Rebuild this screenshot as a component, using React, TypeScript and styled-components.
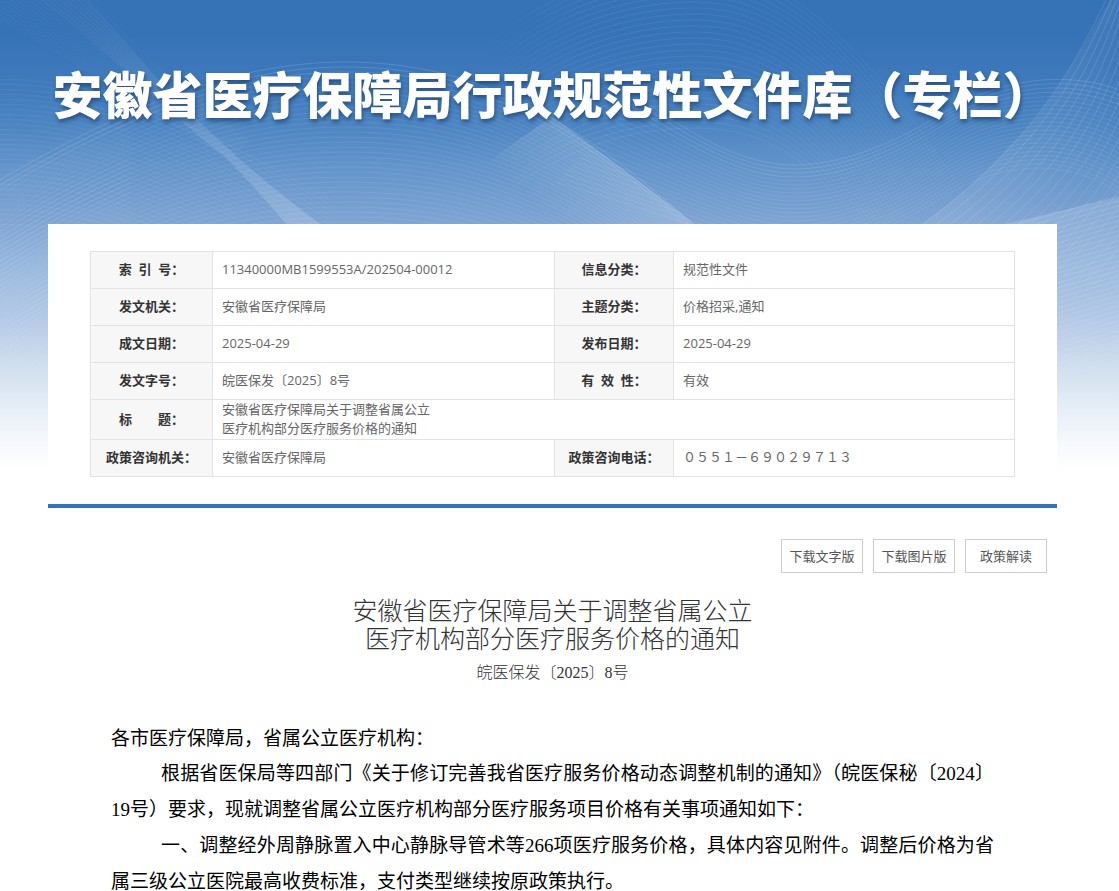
import React from "react";
import styled, { createGlobalStyle } from "styled-components";

const sans = `"Open Sans", "Noto Sans CJK SC", sans-serif`;
const serif = `"Liberation Serif", "Noto Sans CJK SC", serif`;

const GlobalStyle = createGlobalStyle`
  * { box-sizing: border-box; }
  body { margin: 0; background: #fff; color: #333; font-family: ${sans}; font-size: 13px; }
  h1, h2, p { margin: 0; font-weight: 400; }
`;

const Page = styled.div`
  position: relative;
  padding: 0 62px 0 48px;
`;

const Backdrop = styled.div`
  position: absolute;
  top: 0;
  left: 0;
  right: 0;
  height: 476px;
  z-index: -1;
  background: linear-gradient(
    #3672b6 0%, #3672b6 7%, #3a76b9 13%, #437dbe 20%, #4c85c2 26%, #6394ca 35%, #7da3d2 46%,
    #9abade 57%, #b7cbe7 68%, #d3e0ee 78%, #e7eef7 86%, #f8fafd 94%, #fff 100%
  );

  svg {
    display: block;
    width: 100%;
    height: 100%;
  }
`;

const Banner = styled.header`
  height: 224px;
  padding-top: 55px;
`;

const SiteTitle = styled.h1`
  display: flex;
  justify-content: center;
  color: #fff;
  font-family: "Noto Sans CJK SC", sans-serif;
  font-size: 50px;
  font-weight: 900;
  line-height: 74px;
  white-space: nowrap;
  text-shadow: 1px 3px 4px rgba(20, 50, 90, 0.6);
`;

const Panel = styled.section`
  padding: 27px 42px;
  background: #fff;
  border-bottom: 4px solid #3672b6;
`;

const InfoTable = styled.table`
  width: 100%;
  table-layout: fixed;
  border-collapse: collapse;
`;

const Row = styled.tr<{ $tall?: boolean }>`
  height: ${(p) => (p.$tall ? 40 : 37)}px;
`;

const Label = styled.th`
  padding: 0 0 1px;
  border: 1px solid #e3e3e3;
  background: #f7f7f7;
  color: #333;
  font-weight: 700;
  line-height: 19px;
  text-align: center;
  white-space: nowrap;
`;

const Value = styled.td`
  padding: 0 9px 1px;
  border: 1px solid #e3e3e3;
  color: #666;
  line-height: 19px;
`;

const Actions = styled.nav`
  display: flex;
  justify-content: flex-end;
  gap: 10px;
  padding: 31px 10px 23px;
`;

const ActionButton = styled.button`
  width: 82px;
  height: 34px;
  padding: 0 0 2px;
  border: 1px solid #ccc;
  background: #fff;
  color: #555;
  font: 13px ${sans};
  cursor: pointer;
`;

const DocTitle = styled.h2`
  color: #333;
  font-size: 25px;
  font-weight: 300;
  line-height: 28px;
  text-align: center;
`;

const DocNumber = styled.p`
  padding-top: 11px;
  font-family: ${serif};
  font-size: 16px;
  font-weight: 300;
  line-height: 20px;
  text-align: center;
`;

const Article = styled.article`
  padding: 39px 63px 0;
  color: #000;
  font-family: ${serif};
  font-size: 19px;
  font-weight: 500;
`;

const Salutation = styled.p`
  line-height: 34px;
`;

const Paragraph = styled.p`
  line-height: 36px;
  text-indent: 50px;
  text-align: justify;
`;

const range = (n: number) => Array.from({ length: n }, (_, i) => i);

function Waves() {
  return (
    <svg viewBox="0 0 1119 476" preserveAspectRatio="xMidYMin slice" aria-hidden="true">
      <defs>
        <linearGradient id="fade" x1="0" y1="0" x2="0" y2="1">
          <stop offset="0" stopColor="#fff" />
          <stop offset="0.6" stopColor="#fff" />
          <stop offset="0.95" stopColor="#000" />
        </linearGradient>
        <mask id="fadeMask" maskUnits="userSpaceOnUse" x="0" y="0" width="1119" height="476">
          <rect width="1119" height="476" fill="url(#fade)" />
        </mask>
        <linearGradient id="wedge" gradientUnits="userSpaceOnUse" x1="640" y1="180" x2="590" y2="246">
          <stop offset="0" stopColor="#fff" stopOpacity="0.18" />
          <stop offset="1" stopColor="#fff" stopOpacity="0" />
        </linearGradient>
        <linearGradient id="ribbon" gradientUnits="userSpaceOnUse" x1="100" y1="0" x2="300" y2="224">
          <stop offset="0" stopColor="#fff" stopOpacity="0.02" />
          <stop offset="1" stopColor="#fff" stopOpacity="0.17" />
        </linearGradient>
        <linearGradient id="corner" gradientUnits="userSpaceOnUse" x1="1000" y1="150" x2="1080" y2="200">
          <stop offset="0" stopColor="#fff" stopOpacity="0.08" />
          <stop offset="1" stopColor="#fff" stopOpacity="0" />
        </linearGradient>
        <linearGradient id="shelf" gradientUnits="userSpaceOnUse" x1="1070" y1="200" x2="1090" y2="300">
          <stop offset="0" stopColor="#fff" stopOpacity="0.16" />
          <stop offset="1" stopColor="#fff" stopOpacity="0" />
        </linearGradient>
        <linearGradient id="domeStroke" gradientUnits="userSpaceOnUse" x1="460" y1="0" x2="960" y2="0">
          <stop offset="0" stopColor="#fff" stopOpacity="0" />
          <stop offset="0.25" stopColor="#fff" stopOpacity="0.08" />
          <stop offset="0.75" stopColor="#fff" stopOpacity="0.06" />
          <stop offset="1" stopColor="#fff" stopOpacity="0.05" />
        </linearGradient>
      </defs>
      <g mask="url(#fadeMask)" fill="none" stroke="#fff" strokeWidth="1">
        <path d="M40 0H88C112 26 134 52 155 76C205 130 260 180 320 224H286C266 200 244 176 224 156C180 124 130 70 40 0Z" fill="url(#ribbon)" stroke="none" />
        <path d="M552 116C600 152 648 188 695 224H400Z" fill="url(#wedge)" stroke="none" />
        <path d="M1110 0C1080 50 1050 110 1010 146C985 176 950 204 922 224H1119V0Z" fill="url(#corner)" stroke="none" />
        <path d="M1005 224C1040 216 1080 206 1119 197V310H1005Z" fill="url(#shelf)" stroke="none" />

        {/* band of fine lines falling from the top left corner */}
        {range(20).map((i) => (
          <path key={`a${i}`} strokeOpacity="0.05" d={`M${-20 + i * 5} ${6 - i}C${40 + i * 4} ${42 - i} ${110 + i * 2} ${84 - i} ${230 + i} ${160 - i}`} />
        ))}

        {/* wide domes on the left */}
        {range(44).map((i) => (
          <path key={`b${i}`} strokeOpacity={i < 3 ? 0.14 : 0.08} d={`M-60 ${216 + i * 5}C${110 - i} ${110 + i * 5} ${230 - i} ${62 + i * 5} 345 ${62 + i * 5}S${560 + i} ${104 + i * 5} ${690 + i * 2} ${222 + i * 5}`} />
        ))}
        {range(30).map((i) => (
          <path key={`c${i}`} strokeOpacity="0.06" d={`M-10 ${80 + i * 5}Q60 ${76 + i * 5} 140 ${106 + i * 5}T330 ${200 + i * 5}`} />
        ))}
        {range(50).map((i) => (
          <path key={`d${i}`} strokeOpacity="0.08" d={`M-10 ${192 + i * 5}Q60 ${150 + i * 5} 130 ${118 + i * 5}`} />
        ))}

        {/* domes behind the middle of the title */}
        {range(28).map((i) => (
          <path key={`e${i}`} stroke="url(#domeStroke)" d={`M460 ${70 + i * 6}C530 ${-2 + i * 6} 615 ${-34 + i * 6} 695 ${-34 + i * 6}S${870 - i} ${30 + i * 5} ${1010 - i * 3} ${270 + i * 3}`} />
        ))}

        {/* bowls rising to the right */}
        {range(22).map((i) => (
          <path key={`f${i}`} strokeOpacity={i < 4 ? 0.12 : 0.08} d={`M${640 - i * 4} ${98 + i * 4}C700 ${140 + i * 4} 745 ${165 + i * 4} 795 ${165 + i * 4}S900 ${140 + i * 4} 945 ${112 + i * 4}S1060 ${66 + i * 4} 1125 ${92 + i * 5}`} />
        ))}

        {/* fan on the right edge */}
        {range(26).map((i) => (
          <path key={`g${i}`} strokeOpacity={0.14 - i * 0.003} d={`M${1108 + i * 5} -4C${1076 + i * 7} ${60 + i * 2} ${1040 + i * 9} ${140 + i * 3} ${915 + i * 10} ${230 + i * 3}`} />
        ))}
        {range(34).map((i) => (
          <path key={`h${i}`} strokeOpacity="0.12" d={`M1005 ${228 + i * 5}Q1060 ${212 + i * 5} 1125 ${194 + i * 5}`} />
        ))}
      </g>
    </svg>
  );
}

const rows: [string, string, string, string][] = [
  ["索\u00a0\u00a0引\u00a0\u00a0号：", "11340000MB1599553A/202504-00012", "信息分类：", "规范性文件"],
  ["发文机关：", "安徽省医疗保障局", "主题分类：", "价格招采,通知"],
  ["成文日期：", "2025-04-29", "发布日期：", "2025-04-29"],
  ["发文字号：", "皖医保发〔2025〕8号", "有\u00a0\u00a0效\u00a0\u00a0性：", "有效"],
];

export default function App() {
  return (
    <>
      <GlobalStyle />
      <Page>
        <Backdrop>
          <Waves />
        </Backdrop>
        <Banner>
          <SiteTitle>安徽省医疗保障局行政规范性文件库（专栏）</SiteTitle>
        </Banner>
        <main>
          <Panel>
            <InfoTable>
              <colgroup>
                <col style={{ width: "13.2%" }} />
                <col style={{ width: "37%" }} />
                <col style={{ width: "12.9%" }} />
                <col />
              </colgroup>
              <tbody>
                {rows.map(([l1, v1, l2, v2]) => (
                  <Row key={l1}>
                    <Label scope="row">{l1}</Label>
                    <Value>{v1}</Value>
                    <Label scope="row">{l2}</Label>
                    <Value>{v2}</Value>
                  </Row>
                ))}
                <Row $tall>
                  <Label scope="row">标　　题：</Label>
                  <Value colSpan={3}>
                    安徽省医疗保障局关于调整省属公立
                    <br />
                    医疗机构部分医疗服务价格的通知
                  </Value>
                </Row>
                <Row>
                  <Label scope="row">政策咨询机关：</Label>
                  <Value>安徽省医疗保障局</Value>
                  <Label scope="row">政策咨询电话：</Label>
                  <Value>０５５１－６９０２９７１３</Value>
                </Row>
              </tbody>
            </InfoTable>
          </Panel>
          <Actions>
            <ActionButton type="button">下载文字版</ActionButton>
            <ActionButton type="button">下载图片版</ActionButton>
            <ActionButton type="button">政策解读</ActionButton>
          </Actions>
          <DocTitle>
            安徽省医疗保障局关于调整省属公立
            <br />
            医疗机构部分医疗服务价格的通知
          </DocTitle>
          <DocNumber>皖医保发〔2025〕8号</DocNumber>
          <Article>
            <Salutation>各市医疗保障局，省属公立医疗机构：</Salutation>
            <Paragraph>
              根据省医保局等四部门《关于修订完善我省医疗服务价格动态调整机制的通知》（皖医保秘〔2024〕19号）要求，现就调整省属公立医疗机构部分医疗服务项目价格有关事项通知如下：
            </Paragraph>
            <Paragraph>
              一、调整经外周静脉置入中心静脉导管术等266项医疗服务价格，具体内容见附件。调整后价格为省属三级公立医院最高收费标准，支付类型继续按原政策执行。
            </Paragraph>
          </Article>
        </main>
      </Page>
    </>
  );
}
